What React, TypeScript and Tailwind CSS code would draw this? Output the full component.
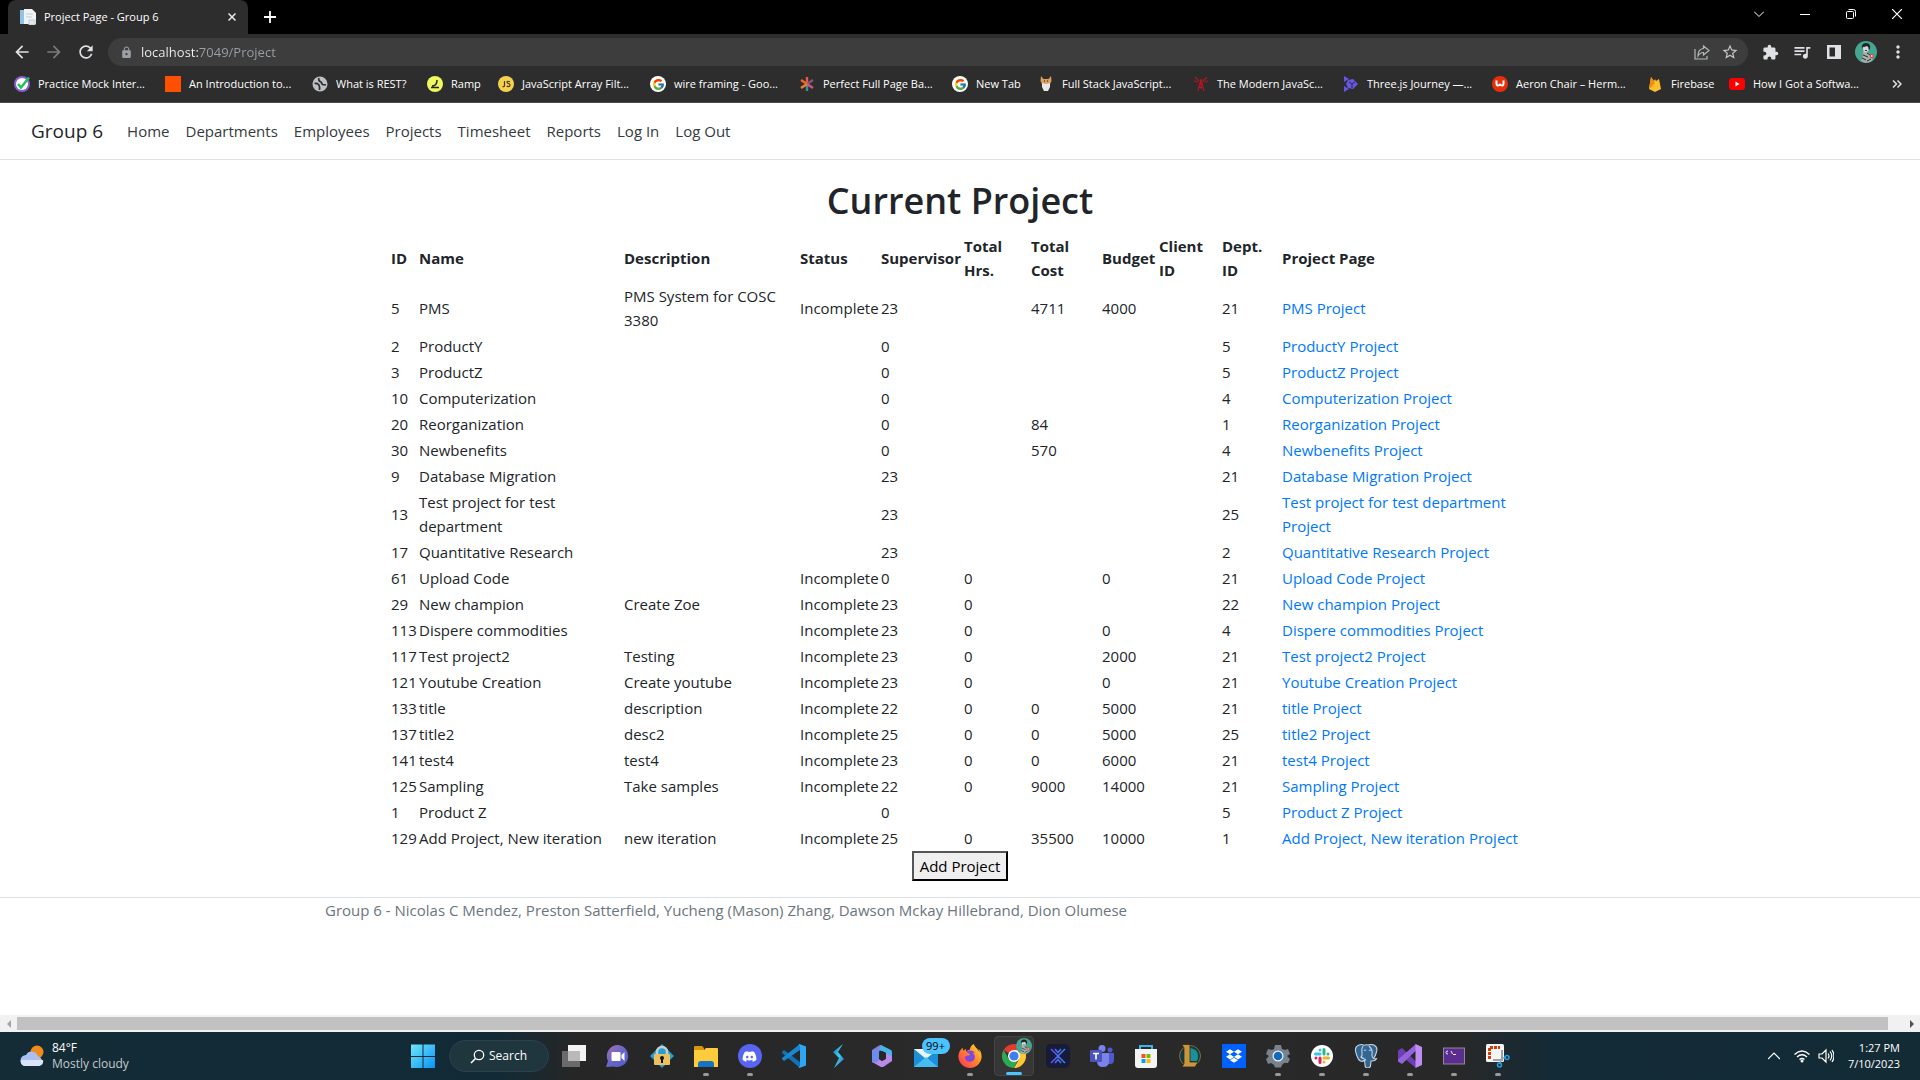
import type { ReactNode } from "react";
import { FcGoogle } from "react-icons/fc";
import { FaDropbox, FaDiscord } from "react-icons/fa";
import { SiFirefoxbrowser } from "react-icons/si";
import { MdExtension, MdQueueMusic, MdLock, MdArrowBack, MdArrowForward, MdRefresh, MdStarBorder, MdMoreVert } from "react-icons/md";

type IconProps = { size?: number; box?: number; children: ReactNode };

function Svg({ size = 24, box = 24, children }: IconProps) {
  return (
    <svg width={size} height={size} viewBox={`0 0 ${box} ${box}`} fill="none" aria-hidden="true" className="shrink-0">
      {children}
    </svg>
  );
}

/* ---------- browser chrome ---------- */

const bookmarks: { label: string; width: string; icon: ReactNode }[] = [
  {
    label: "Practice Mock Inter...",
    width: "w-[151px]",
    icon: (
      <Svg size={16} box={16}>
        <circle cx="8" cy="8" r="8" fill="#8b5fd0" />
        <circle cx="8" cy="8" r="6" fill="#fff" />
        <path d="M4 8l3 3.500L15 1.500" stroke="#1fc15a" strokeWidth="2.400" />
      </Svg>
    ),
  },
  {
    label: "An Introduction to...",
    width: "w-[147px]",
    icon: <Svg size={16} box={16}><path d="M0 0h16v16H0z" fill="#ff4f00" /></Svg>,
  },
  {
    label: "What is REST?",
    width: "w-[115px]",
    icon: (
      <Svg size={16} box={16}>
        <circle cx="8" cy="8" r="7.500" fill="#bdc1c6" />
        <path d="M2.500 7.500q2.500-.500 4 1t1 5.500M7 2q-1 3 2 4l1.500 2.500 3.500.500" stroke="#2d2d2d" strokeWidth="1.700" />
      </Svg>
    ),
  },
  {
    label: "Ramp",
    width: "w-[71px]",
    icon: (
      <Svg size={16} box={16}>
        <circle cx="8" cy="8" r="8" fill="#eff85c" />
        <path d="M4 11.500h8M5 10c3 0 5-2 5-6" stroke="#222" strokeWidth="1.500" />
      </Svg>
    ),
  },
  {
    label: "JavaScript Array Filt...",
    width: "w-[152px]",
    icon: (
      <Svg size={16} box={16}>
        <circle cx="8" cy="8" r="8" fill="#f5d14e" />
        <path d="M6.500 5v4.500q0 1.500-2 1M12 5.800q-3-1.300-3 .500c0 1.500 3 1 3 2.700 0 2-2.200 1.800-3.300 1" stroke="#4a3a12" strokeWidth="1.200" />
      </Svg>
    ),
  },
  { label: "wire framing - Goo...", width: "w-[149px]", icon: <GoogleMark /> },
  {
    label: "Perfect Full Page Ba...",
    width: "w-[153px]",
    icon: (
      <Svg size={16} box={16}>
        <g strokeWidth="2.400">
          <path d="M8 8V1" stroke="#f05a3c" />
          <path d="M8 8l6-4" stroke="#7d5a78" />
          <path d="M8 8l6 4" stroke="#d0557a" />
          <path d="M8 8v7" stroke="#3f8f9a" />
          <path d="M8 8l-6 4" stroke="#f08030" />
          <path d="M8 8L2 4" stroke="#f4652f" />
        </g>
      </Svg>
    ),
  },
  { label: "New Tab", width: "w-[86px]", icon: <GoogleMark /> },
  {
    label: "Full Stack JavaScript...",
    width: "w-[155px]",
    icon: (
      <Svg size={16} box={16}>
        <path d="M3 0l2.500 3h5L13 0l.500 5-2 4h-7l-2-4z" fill="#d9a05a" />
        <path d="M4 7l4 1 4-1v4l-2 4H6l-2-4z" fill="#e8e8e8" />
        <path d="M6 5h1M9 5h1" stroke="#222" strokeWidth="1.200" />
      </Svg>
    ),
  },
  {
    label: "The Modern JavaSc...",
    width: "w-[150px]",
    icon: (
      <Svg size={16} box={16}>
        <path d="M2 1l4 4M14 1l-4 4M1 5l4 1M15 5l-4 1M8 3l-3 12M8 3l3 12M6.500 8h3M5 11.500h5.500M8 4v9" stroke="#b01722" strokeWidth="1.200" />
      </Svg>
    ),
  },
  {
    label: "Three.js Journey —...",
    width: "w-[149px]",
    icon: (
      <Svg size={16} box={16}>
        <path d="M1 0l5 3-5 3zM1 10l5 3-5 3zM5 4l5-1 5 5-5 5-5-1-2-4z" fill="#6656e8" />
        <path d="M6 6l3 2 3-2M9 8v4" stroke="#2d2d2d" />
      </Svg>
    ),
  },
  {
    label: "Aeron Chair – Herm...",
    width: "w-[155px]",
    icon: (
      <Svg size={16} box={16}>
        <circle cx="8" cy="8" r="8" fill="#e5310b" />
        <path d="M4.500 4.500v3q0 3.500 3.500 1 3.500 2.500 3.500-1v-3" stroke="#fff" strokeWidth="2" />
      </Svg>
    ),
  },
  {
    label: "Firebase",
    width: "w-[82px]",
    icon: (
      <Svg size={16} box={16}>
        <path d="M2 13L4 1l3 4 1-2 1 2 3-2 2 10-6 3z" fill="#fbc02d" />
        <path d="M2 13L4 1l4 6z" fill="#f58a0b" />
      </Svg>
    ),
  },
  {
    label: "How I Got a Softwa...",
    width: "w-[150px]",
    icon: (
      <Svg size={16} box={16}>
        <rect y="2" width="16" height="12" rx="3" fill="#f00" />
        <path d="M6.500 5.500v5L10.500 8z" fill="#fff" />
      </Svg>
    ),
  },
];

function GoogleMark() {
  return (
    <span className="flex size-4 shrink-0 items-center justify-center rounded-full bg-white">
      <FcGoogle size={13} />
    </span>
  );
}

function Avatar({ size }: { size: number }) {
  return (
    <Svg size={size} box={22}>
      <circle cx="11" cy="11" r="11" fill="#46a591" />
      <path d="M8 10l4 1 5 4 .500 4.500Q14 22 10 21.800L6 20l2-6z" fill="#a9aca9" />
      <path d="M7.500 5h6v5l-3 1.500-2-1.500z" fill="#d4d6d3" />
      <path d="M7 8Q6 2 11 2t4 6l-1 1q0-3-2-4-2 1-4 1z" fill="#1f2524" />
      <path d="M8 14l5 2M7 17l4 2M12 12l3 2M10 9.500h2M12 20l4-2" stroke="#2c3231" />
      <path d="M15.500 13.500h2.500v3h-2.500z" stroke="#d6453d" fill="#f0d9d6" />
    </Svg>
  );
}

function TabStrip() {
  return (
    <div className="flex h-[34px] justify-between bg-black pl-2 text-white">
      <div className="flex items-center">
        <div className="flex h-full w-[240px] items-center gap-2 rounded-t-lg bg-[#2d2d2d] px-3">
          <Svg size={16} box={16}>
            <path d="M0 1h8v14H0z" fill="#8fc4e6" />
            <path d="M4 0h8l4 4v11H4z" fill="#f1f4f6" />
            <path d="M6 5h7M6 8h6M9 11h6v5H9z" stroke="#c4ccd2" fill="#e3e7ea" />
          </Svg>
          <button className="flex-1 text-left text-[11px] whitespace-nowrap">Project Page - Group 6</button>
          <button aria-label="Close tab">
            <Svg size={8} box={8}><path d="M.500.500l7 7m0-7l-7 7" stroke="#e8eaed" strokeWidth="1.500" /></Svg>
          </button>
        </div>
        <button aria-label="New tab" className="ml-4">
          <Svg size={12} box={12}><path d="M6 0v12M0 6h12" stroke="#fff" strokeWidth="1.800" /></Svg>
        </button>
      </div>
      <div className="flex h-7 items-center">
        <button aria-label="Search tabs" className="flex w-[46px] justify-center">
          <Svg size={10} box={10}><path d="M0 2.500l5 5 5-5" stroke="#fff" /></Svg>
        </button>
        <button aria-label="Minimize" className="flex w-[46px] justify-center">
          <Svg size={10} box={10}><path d="M0 5.500h10" stroke="#fff" /></Svg>
        </button>
        <button aria-label="Restore" className="flex w-[46px] justify-center">
          <Svg size={10} box={10}>
            <rect x=".5" y="2.500" width="7" height="7" rx="1" stroke="#fff" />
            <path d="M2.500.500h5q2 0 2 2v5" stroke="#fff" />
          </Svg>
        </button>
        <button aria-label="Close window" className="flex w-[46px] justify-center">
          <Svg size={10} box={10}><path d="M0 0l10 10M10 0L0 10" stroke="#fff" strokeWidth="1.200" /></Svg>
        </button>
      </div>
    </div>
  );
}

function Toolbar() {
  return (
    <div className="flex h-9 items-center bg-[#2d2d2d] pr-1.5 text-[#dfe1e5]">
      <div className="flex w-[108px] shrink-0 items-center pl-1.5">
        <button aria-label="Back" className="flex w-8 justify-center"><MdArrowBack size={20} /></button>
        <button aria-label="Forward" className="flex w-8 justify-center text-[#7b7b7b]"><MdArrowForward size={20} /></button>
        <button aria-label="Reload" className="flex w-8 justify-center"><MdRefresh size={20} /></button>
      </div>
      <div className="flex h-7 flex-1 items-center rounded-full bg-[#3d3d3d] pr-1.5 pl-3 text-[#c4c7ca]">
        <MdLock size={13} className="shrink-0 text-[#9aa0a6]" />
        <input
          aria-label="Address"
          defaultValue="localhost:7049/Project"
          className="ml-2 flex-1 bg-[linear-gradient(90deg,#f1f3f4_58px,#9aa0a6_58px)] bg-clip-text pt-px text-[13px] text-transparent outline-none"
        />
        <button aria-label="Share" className="flex w-8 justify-center">
          <Svg size={16} box={16}>
            <path d="M1 5v10h12v-3M9.500 2l5.500 4.500-5.500 4.500V8.500Q6 8.500 4 12q0-7 5.500-7.500z" stroke="#b5b8bb" strokeWidth="1.200" />
          </Svg>
        </button>
        <button aria-label="Bookmark" className="flex w-6 justify-center"><MdStarBorder size={18} /></button>
      </div>
      <div className="flex shrink-0 items-center pl-1.5">
        <button aria-label="Extensions" className="flex w-8 justify-center"><MdExtension size={17} /></button>
        <button aria-label="Media" className="flex w-8 justify-center"><MdQueueMusic size={20} /></button>
        <button aria-label="Side panel" className="flex w-8 justify-center">
          <Svg size={14} box={14}><path d="M0 0h14v14H0zM2.500 2.500v9H8v-9z" fill="#dfe1e5" fillRule="evenodd" /></Svg>
        </button>
        <button aria-label="Profile" className="flex w-8 justify-center"><Avatar size={22} /></button>
        <button aria-label="Menu" className="flex w-8 justify-center"><MdMoreVert size={20} /></button>
      </div>
    </div>
  );
}

function BookmarkBar() {
  return (
    <div className="flex h-[33px] items-center justify-between border-b border-[#4c4c4c] bg-[#2d2d2d] pr-[18px] pb-1 pl-3.5 text-white">
      <div className="flex min-w-0">
        {bookmarks.map((b) => (
          <a key={b.label} href="#bookmark" className={`flex shrink-0 items-center gap-2 text-[11px] whitespace-nowrap ${b.width}`}>
            {b.icon}
            {b.label}
          </a>
        ))}
      </div>
      <button aria-label="More bookmarks">
        <Svg size={10} box={10}><path d="M1 1.500L4.500 5 1 8.500M5.500 1.500L9 5 5.500 8.500" stroke="#dfe1e5" strokeWidth="1.500" /></Svg>
      </button>
    </div>
  );
}

/* ---------- page ---------- */

const navLinks = ["Home", "Departments", "Employees", "Projects", "Timesheet", "Reports", "Log In", "Log Out"];

const columns: [string, string][] = [
  ["ID", "w-7"],
  ["Name", "w-[205px]"],
  ["Description", "w-[176px]"],
  ["Status", "w-[81px]"],
  ["Supervisor", "w-[83px]"],
  ["Total Hrs.", "w-[67px]"],
  ["Total Cost", "w-[71px]"],
  ["Budget", "w-[57px]"],
  ["Client ID", "w-[63px]"],
  ["Dept. ID", "w-[60px]"],
  ["Project Page", "w-auto"],
];

/* id, name, description, status, supervisor, hours, cost, budget, client, department */
const projects: string[][] = [
  ["5", "PMS", "PMS System for COSC 3380", "Incomplete", "23", "", "4711", "4000", "", "21"],
  ["2", "ProductY", "", "", "0", "", "", "", "", "5"],
  ["3", "ProductZ", "", "", "0", "", "", "", "", "5"],
  ["10", "Computerization", "", "", "0", "", "", "", "", "4"],
  ["20", "Reorganization", "", "", "0", "", "84", "", "", "1"],
  ["30", "Newbenefits", "", "", "0", "", "570", "", "", "4"],
  ["9", "Database Migration", "", "", "23", "", "", "", "", "21"],
  ["13", "Test project for test department", "", "", "23", "", "", "", "", "25"],
  ["17", "Quantitative Research", "", "", "23", "", "", "", "", "2"],
  ["61", "Upload Code", "", "Incomplete", "0", "0", "", "0", "", "21"],
  ["29", "New champion", "Create Zoe", "Incomplete", "23", "0", "", "", "", "22"],
  ["113", "Dispere commodities", "", "Incomplete", "23", "0", "", "0", "", "4"],
  ["117", "Test project2", "Testing", "Incomplete", "23", "0", "", "2000", "", "21"],
  ["121", "Youtube Creation", "Create youtube", "Incomplete", "23", "0", "", "0", "", "21"],
  ["133", "title", "description", "Incomplete", "22", "0", "0", "5000", "", "21"],
  ["137", "title2", "desc2", "Incomplete", "25", "0", "0", "5000", "", "25"],
  ["141", "test4", "test4", "Incomplete", "23", "0", "0", "6000", "", "21"],
  ["125", "Sampling", "Take samples", "Incomplete", "22", "0", "9000", "14000", "", "21"],
  ["1", "Product Z", "", "", "0", "", "", "", "", "5"],
  ["129", "Add Project, New iteration", "new iteration", "Incomplete", "25", "0", "35500", "10000", "", "1"],
];

function ProjectTable() {
  return (
    <table className="w-full table-fixed border-collapse text-left">
      <thead>
        <tr>
          {columns.map(([title, width]) => (
            <th key={title} scope="col" className={`p-px font-bold ${width}`}>{title}</th>
          ))}
        </tr>
      </thead>
      <tbody>
        {projects.map((row) => (
          <tr key={row[0]}>
            {row.map((value, i) => (
              <td key={i} className="p-px">{value}</td>
            ))}
            <td className="p-px">
              <a href="#project" className="text-[#0077ff]">{row[1]} Project</a>
            </td>
          </tr>
        ))}
      </tbody>
    </table>
  );
}

function Page() {
  return (
    <div className="flex flex-1 flex-col bg-white text-[15px] leading-6 text-[#212529]">
      <nav className="flex h-[57px] items-center border-b border-[#dee2e6] pl-[31px]">
        <a href="#home" className="mr-6 text-[19px]">Group 6</a>
        <ul className="flex gap-4 text-[#343a40]">
          {navLinks.map((l) => (
            <li key={l}><a href="#nav">{l}</a></li>
          ))}
        </ul>
      </nav>
      <main className="mx-auto w-full max-w-[1140px] pt-[17px] pb-4 text-center">
        <h1 className="mb-2 text-4xl leading-[48px] font-semibold">Current Project</h1>
        <ProjectTable />
        <button className="h-[30px] border-2 border-t-[#555] border-r-black border-b-black border-l-[#555] bg-[#efefef] px-1.5 align-top text-black">
          Add Project
        </button>
      </main>
      <footer className="border-t border-[#dee2e6] text-[#6c757d]">
        <div className="mx-auto max-w-[1300px] px-[15px]">
          Group 6 - Nicolas C Mendez, Preston Satterfield, Yucheng (Mason) Zhang, Dawson Mckay Hillebrand, Dion Olumese
        </div>
      </footer>
    </div>
  );
}

function ScrollBar() {
  return (
    <div className="flex h-[17px] items-center bg-[#f1f1f1]">
      <button aria-label="Scroll left" className="flex w-[17px] justify-center">
        <Svg size={8} box={8}><path d="M6 0v8L2 4z" fill="#a3a3a3" /></Svg>
      </button>
      <div className="h-[13px] flex-1 bg-[#c1c1c1]" />
      <button aria-label="Scroll right" className="flex w-8 justify-end pr-1">
        <Svg size={8} box={8}><path d="M2 0v8l4-4z" fill="#505050" /></Svg>
      </button>
    </div>
  );
}

/* ---------- taskbar ---------- */

type TaskApp = { name: string; icon: ReactNode; mark?: "open" | "active" };

const apps: TaskApp[] = [
  {
    name: "Task View",
    icon: (
      <Svg>
        <path d="M6 1h18v16H6z" fill="#f3f3f3" />
        <path d="M0 7h18v16H0z" fill="#777" fillOpacity=".85" />
        <path d="M6 7h12v10H6z" fill="#b9b9b9" />
      </Svg>
    ),
  },
  {
    name: "Chat",
    icon: (
      <Svg>
        <defs><linearGradient id="chat" x1="0" y1="0" x2="1" y2="1"><stop stopColor="#a76fb4" /><stop offset=".5" stopColor="#6a66c8" /><stop offset="1" stopColor="#5059d0" /></linearGradient></defs>
        <path d="M12 1a11 11 0 1 1-4 21.500L0 23l2-6A11 11 0 0 1 12 1z" fill="url(#chat)" />
        <rect x="5.500" y="8" width="9" height="9" rx="1" fill="#fff" />
        <path d="M15.500 11l3-3v9l-3-3z" fill="#fff" />
      </Svg>
    ),
  },
  {
    name: "Password Safe",
    icon: (
      <Svg>
        <path d="M12 0l12 12-12 12L0 12z" fill="#259fd4" />
        <path d="M7 11V8a5 5 0 0 1 10 0v3" stroke="#c9cdcf" strokeWidth="2.500" />
        <rect x="4" y="10" width="16" height="11" rx="1" fill="#eac15e" />
        <circle cx="12" cy="14" r="2" fill="#111" /><path d="M11 14h2v5h-2z" fill="#111" />
      </Svg>
    ),
  },
  {
    name: "File Explorer",
    mark: "open",
    icon: (
      <Svg>
        <path d="M0 3q0-1 1-1h7l2 2v4H0z" fill="#d9950c" />
        <path d="M0 6h10l2-2h11q1 0 1 1v18H0z" fill="#fdcb3c" />
        <path d="M4 23v-3q0-3 3-3h10q3 0 3 3v3z" fill="#1374c4" />
      </Svg>
    ),
  },
  {
    name: "Discord",
    mark: "open",
    icon: <span className="flex size-6 items-center justify-center rounded-full bg-[#5865f2] text-white"><FaDiscord size={15} /></span>,
  },
  {
    name: "Visual Studio Code",
    icon: (
      <Svg>
        <path d="M0 8l2-2 16 12v6L0 9z" fill="#1272b8" />
        <path d="M0 15l2 2L18 6V0L0 14z" fill="#1a86d0" />
        <path d="M17.500 0L24 2.500v19L17.500 24l-1-1 1.500-1V2l-1.500-1z" fill="#2ea6f2" />
      </Svg>
    ),
  },
  {
    name: "Swift Notes",
    icon: (
      <Svg>
        <defs><linearGradient id="bolt" x1="0" y1="0" x2="1" y2="1"><stop stopColor="#1667d8" /><stop offset=".5" stopColor="#37d2ea" /><stop offset="1" stopColor="#3157c8" /></linearGradient></defs>
        <path d="M17 0L7 8l6 6-5 10 10-9-6-7z" fill="url(#bolt)" />
      </Svg>
    ),
  },
  {
    name: "Microsoft 365",
    icon: (
      <Svg>
        <path d="M9 1.500q2-1 3 0L9 8v8l-6 3-1-1V6z" fill="#8d7be6" />
        <path d="M11 1l10 5q1 1 1 2v7l-6-3V9l-7-3z" fill="#45b6ea" />
        <path d="M22 12v5l-8 5.500q-2 1-4 0L3 18.500 9 15l3 2 4-2V9l6 3z" fill="#b98aec" />
        <path d="M2 7v10l4 2 3-3V6z" fill="#6c8cee" />
        <path d="M9 9l3-2 4 2v5l-4 3-3-2z" fill="#282828" />
      </Svg>
    ),
  },
  {
    name: "Mail",
    icon: (
      <span className="relative">
        <Svg>
          <path d="M0 5h24v18H0z" fill="#1c8fd6" />
          <path d="M0 5h24L12 15z" fill="#e9f4fb" />
          <path d="M0 23L12 13l12 10z" fill="#45bdf2" />
        </Svg>
        <span className="absolute -top-1.5 left-2 flex h-4 w-7 items-center justify-center rounded-full bg-[#4cc2ff] text-[11px] text-black">99+</span>
      </span>
    ),
  },
  {
    name: "Firefox",
    mark: "open",
    icon: (
      <Svg>
        <defs><linearGradient id="fox" x1="1" y1="0" x2="0" y2="1"><stop stopColor="#ffe13b" /><stop offset=".45" stopColor="#ff8a26" /><stop offset="1" stopColor="#ff2a62" /></linearGradient></defs>
        <circle cx="12" cy="13" r="7" fill="#8146dc" />
        <SiFirefoxbrowser size={24} fill="url(#fox)" />
      </Svg>
    ),
  },
  {
    name: "Chrome",
    mark: "active",
    icon: (
      <span className="relative">
        <Svg>
          <path d="M12 12L1.600 6A12 12 0 0 1 22.400 6z" fill="#e33b2e" />
          <path d="M12 12V6h10.400A12 12 0 0 1 12 24l5.200-9z" fill="#fcc934" />
          <path d="M1.600 6l5.200 9 5.200 3 3-.500L12 24A12 12 0 0 1 1.600 6z" fill="#2da94f" />
          <circle cx="12" cy="12" r="6" fill="#fff" /><circle cx="12" cy="12" r="4.600" fill="#3f7df0" />
        </Svg>
        <span className="absolute -top-1.5 left-3.5"><Avatar size={16} /></span>
      </span>
    ),
  },
  {
    name: "Xcross",
    icon: (
      <Svg>
        <defs><linearGradient id="cross" gradientUnits="userSpaceOnUse" x1="4" y1="0" x2="20" y2="0"><stop stopColor="#6a4df0" /><stop offset="1" stopColor="#2f8df6" /></linearGradient></defs>
        <rect width="24" height="24" rx="5" fill="#181a3a" />
        <path d="M5 5l7 7 7-7M5 19l7-7 7 7M9 5l3 3.500L15 5M9 19l3-3.500 3 3.500" stroke="url(#cross)" strokeWidth="1.500" />
      </Svg>
    ),
  },
  {
    name: "Teams",
    icon: (
      <Svg>
        <circle cx="12" cy="4.500" r="3.500" fill="#7b83eb" /><circle cx="20" cy="6" r="2.500" fill="#5059c9" />
        <path d="M15 9h9v7q0 4-4 4h-3z" fill="#5059c9" />
        <path d="M7 9h12v8q0 6-6 6t-6-6z" fill="#7b83eb" />
        <rect y="6" width="12" height="12" rx="1" fill="#4b53bc" />
        <path d="M3 9.500h6M6 9.500v6" stroke="#fff" strokeWidth="1.600" />
      </Svg>
    ),
  },
  {
    name: "Microsoft Store",
    icon: (
      <Svg>
        <path d="M6 6V2h12v4" stroke="#34b6ee" strokeWidth="2" />
        <path d="M1 5h22v16q0 3-3 3H4q-3 0-3-3z" fill="#f4f4f4" />
        <path d="M7.500 10h4v4h-4z" fill="#f25022" /><path d="M12.500 10h4v4h-4z" fill="#7fba00" />
        <path d="M7.500 15h4v4h-4z" fill="#00a4ef" /><path d="M12.500 15h4v4h-4z" fill="#ffb900" />
      </Svg>
    ),
  },
  {
    name: "League of Legends",
    icon: (
      <Svg>
        <circle cx="12" cy="12" r="10.500" fill="#0d3f4a" stroke="#8a6a2c" />
        <path d="M12 4q8 1 8 8 0 3-1 5h-7z" fill="#1c8f98" />
        <path d="M4 .500h8V18h8l-3 5H4l2-3.500V4z" fill="#c8963e" stroke="#3a2a10" strokeWidth=".8" />
      </Svg>
    ),
  },
  { name: "Dropbox", icon: <span className="flex size-6 items-center justify-center bg-[#0061fe] text-white"><FaDropbox size={16} /></span> },
  {
    name: "Settings",
    mark: "open",
    icon: (
      <Svg>
        <path d="M9 1h6l1 4 3 1 3-1 2 5-3 2 3 3-2 4-4 0-2 2-1 2.500H9L8 21l-3-2-3 1-2-5 3-3-3-2 2-5 4 1 2-1z" fill="#77828c" />
        <circle cx="12" cy="12" r="5.500" fill="#f0f3f5" /><circle cx="12" cy="12" r="4.300" fill="#1369bd" />
      </Svg>
    ),
  },
  {
    name: "Slack",
    mark: "open",
    icon: (
      <Svg>
        <circle cx="12" cy="12" r="11" fill="#fff" />
        <g strokeWidth="3" strokeLinecap="round">
          <path d="M10 6v0M5.500 10H10" stroke="#36c5f0" />
          <path d="M14 5.500V10M18 10v0" stroke="#2eb67d" />
          <path d="M14 14h4.500M14 18v0" stroke="#ecb22e" />
          <path d="M10 14v4.500M6 14v0" stroke="#e01e5a" />
        </g>
      </Svg>
    ),
  },
  {
    name: "PostgreSQL",
    mark: "open",
    icon: (
      <Svg>
        <path d="M5 1q3-1 5 .300Q12 .500 14 1q3-1 6 0 4 2 2.500 7-1 4-3 6.500 2 .800 3.500 0-2 3-6 2.500l-.500 5q-.500 2-3 2t-2.500-3l-.500-5q-2 2-4 1Q4 16 2 9 0 3 5 1z" fill="#336791" stroke="#c3d3e0" strokeWidth="1.100" />
        <path d="M9 2Q7 5 8 9q.500 3-1 4 2 2 3.500 1M15 2q4 4 3 8-.500 2 1 4M10 6.500q1.500-1 2 0M15 6.500q1.500-1 2 0M11 15l1 1.500" stroke="#c3d3e0" strokeWidth="1.100" />
      </Svg>
    ),
  },
  {
    name: "Visual Studio",
    mark: "open",
    icon: (
      <Svg>
        <path d="M0 6.500L4 4l14 13.500V24L4 12.500 3 14v3l-3-1.500z" fill="#6c3fb5" />
        <path d="M0 17.500L4 20 18 6.500V0L0 15.500z" fill="#9563dc" />
        <path d="M17.500 0L24 3v18l-6.500 3z" fill="#be8df4" />
      </Svg>
    ),
  },
  {
    name: "Command Prompt",
    mark: "open",
    icon: (
      <Svg>
        <rect x="1.500" y="4" width="21" height="16" fill="#5c2d91" stroke="#8b8b92" />
        <path d="M6 7q-2 0-2 1.500T6 10M7.500 7.500v0M7.500 9.500v0M9 7l1.500 3M11 10.500h3" stroke="#fff" strokeWidth=".9" />
      </Svg>
    ),
  },
  {
    name: "Snipping Tool",
    mark: "open",
    icon: (
      <Svg>
        <rect width="18" height="18" rx="1.500" fill="#f5f5f5" />
        <path d="M3.500 15V3.500H14" stroke="#d83b01" strokeWidth="3" strokeDasharray="3 1" />
        <path d="M7 16h9V6" stroke="#9ba0a5" strokeWidth="2" />
        <path d="M15 15l5-2M15 15l-1 5" stroke="#9ba0a5" strokeWidth="1.500" />
        <circle cx="21" cy="13.500" r="2" stroke="#1aa0e8" strokeWidth="1.600" /><circle cx="13.500" cy="21" r="2" stroke="#1aa0e8" strokeWidth="1.600" />
      </Svg>
    ),
  },
];

function TaskbarApp({ app }: { app: TaskApp }) {
  return (
    <button
      aria-label={app.name}
      className={`relative mx-0.5 flex h-10 w-10 items-center justify-center rounded ${
        app.mark === "active" ? "border border-[#444] bg-[#363636]" : ""
      }`}
    >
      {app.icon}
      {app.mark === "open" && <span className="absolute bottom-0 h-[3px] w-1.5 rounded-full bg-[#9a9a9a]" />}
      {app.mark === "active" && <span className="absolute bottom-0 h-[3px] w-4 rounded-full bg-[#4cc2ff]" />}
    </button>
  );
}

function Taskbar() {
  return (
    <div className="grid h-12 grid-cols-[1fr_auto_1fr] items-center bg-[linear-gradient(90deg,#142c36_0%,#122a36_26%,#262626_30%,#2a2a2a_50%,#282828_76%,#132a37_81%,#132b35_100%)] text-white">
      <button className="flex items-center gap-2 pl-5 text-left text-[12px] leading-4">
        <Svg>
          <circle cx="17" cy="8" r="6.500" fill="#f08c1c" />
          <path d="M6 22a5.500 5.500 0 0 1 0-11 6.500 6.500 0 0 1 12 1.500 5 5 0 0 1 1 9.500z" fill="#a9c0f0" />
          <path d="M4 22a5 5 0 0 1-3-6h22q1 5-4 6z" fill="#d9e4fa" />
        </Svg>
        <span>
          84°F
          <span className="block text-[#c3cacd]">Mostly cloudy</span>
        </span>
      </button>
      <div className="flex items-center">
        <button aria-label="Start" className="flex w-11 justify-center">
          <Svg>
            <defs><linearGradient id="win" x1="0" y1="0" x2="1" y2="1"><stop stopColor="#6ee8fb" /><stop offset="1" stopColor="#0c91f5" /></linearGradient></defs>
            <path d="M0 .500h11.500V12H0zM12.500.500H24V12H12.500zM0 13h11.500v11H0zM12.500 13H24v11H12.500z" fill="url(#win)" />
          </Svg>
        </button>
        <button className="mr-[3px] ml-1 flex h-8 w-[100px] items-center justify-center gap-1 rounded-full border border-[#2b424d] bg-[#20363f] text-[12px]">
          <Svg size={15} box={15}><circle cx="9" cy="6" r="4.700" stroke="#fff" strokeWidth="1.300" /><path d="M5.500 9.500L1 14" stroke="#fff" strokeWidth="1.600" /></Svg>
          Search
        </button>
        {apps.map((a) => <TaskbarApp key={a.name} app={a} />)}
      </div>
      <div className="flex items-center justify-end pr-5">
        <button aria-label="Hidden icons" className="mr-3.5">
          <Svg size={12} box={12}><path d="M0 9l6-6 6 6" stroke="#fff" strokeWidth="1.200" /></Svg>
        </button>
        <button aria-label="Network and volume" className="mr-3.5 flex gap-2">
          <Svg size={16} box={16}>
            <path d="M.500 6.500q7.500-7 15 0M3 9q5-4.500 10 0M5.500 11.500q2.500-2 5 0" stroke="#fff" strokeWidth="1.300" />
            <circle cx="8" cy="13" r="1.500" fill="#fff" />
          </Svg>
          <Svg size={16} box={16}>
            <path d="M1 6h3l4-4v12l-4-4H1zM10 5.500q2 2.500 0 5M12 3.500q3.500 4.500 0 9M14 2q4 6 0 12" stroke="#fff" strokeWidth="1.200" />
          </Svg>
        </button>
        <button className="text-right text-[11px] leading-4">
          1:27 PM
          <span className="block">7/10/2023</span>
        </button>
      </div>
    </div>
  );
}

export default function App() {
  return (
    <div className="flex min-h-screen flex-col font-['Open_Sans','Noto_Sans',sans-serif]">
      <TabStrip />
      <Toolbar />
      <BookmarkBar />
      <Page />
      <ScrollBar />
      <Taskbar />
    </div>
  );
}
